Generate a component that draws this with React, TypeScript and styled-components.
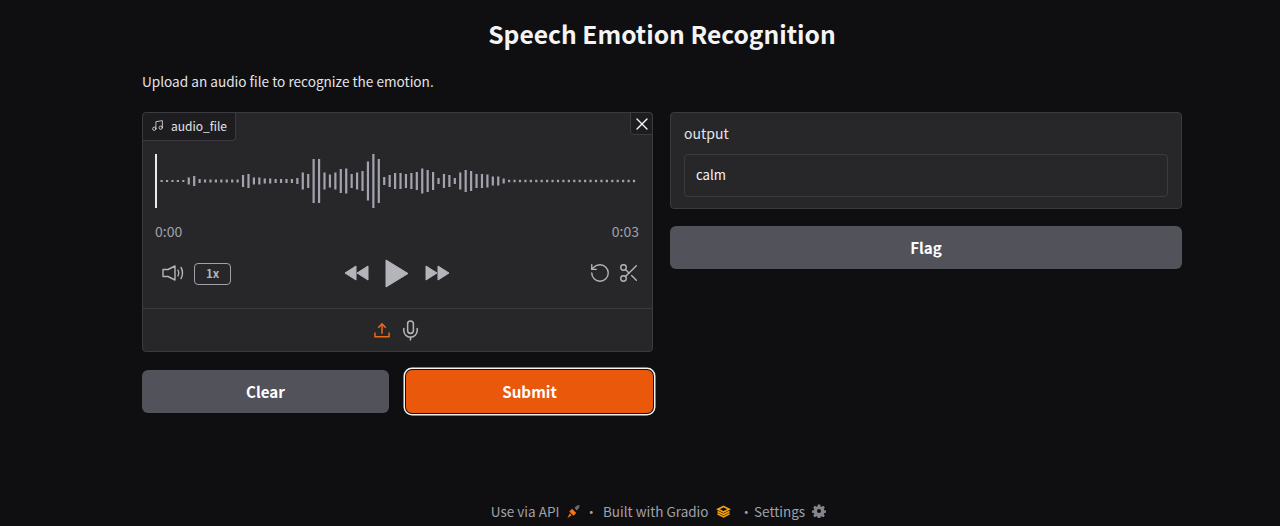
import styled, { createGlobalStyle } from "styled-components";
import { Mic, Music, RotateCcw, Scissors, X } from "lucide-react";

const GlobalStyle = createGlobalStyle`
  html, body {
    margin: 0;
    height: 100%;
    background: #0f0f11;
    overflow: hidden;
  }
  body {
    font-family: "Noto Sans CJK SC", "Noto Sans", sans-serif;
    color: #f4f4f5;
  }
  * {
    box-sizing: border-box;
  }
`;

const Page = styled.div`
  display: flex;
  flex-direction: column;
  height: 526px;
  padding: 0 98px 0 142px;
`;

const Title = styled.h1`
  margin: 0;
  padding-top: 15px;
  height: 52px;
  font-size: 24.6px;
  line-height: 37px;
  font-weight: 700;
  text-align: center;
  color: #f4f4f5;
`;

const Description = styled.p`
  margin: 19px 0 0;
  height: 41px;
  font-size: 13.6px;
  line-height: 21px;
  color: #e4e4e7;
`;

const Columns = styled.div`
  display: grid;
  grid-template-columns: 511px 512px;
  gap: 17px;
`;

const Column = styled.div`
  display: flex;
  flex-direction: column;
  gap: 17px;
`;

const Block = styled.div`
  position: relative;
  background: #27272a;
  border: 1px solid #3a3a40;
  border-radius: 4px;
`;

const LabelTag = styled.div`
  display: inline-flex;
  align-items: center;
  gap: 7px;
  height: 28px;
  padding: 0 8px 2px 8px;
  background: #1d1d20;
  border-right: 1px solid #3a3a40;
  border-bottom: 1px solid #3a3a40;
  border-radius: 4px 0 4px 0;
  font-size: 12px;
  color: #e4e4e7;
`;

const CloseButton = styled.button`
  position: absolute;
  top: -1px;
  right: -1px;
  display: flex;
  align-items: center;
  justify-content: center;
  width: 23px;
  height: 23px;
  padding: 0;
  background: #1d1d20;
  border: 1px solid #3a3a40;
  border-radius: 0 4px 0 4px;
  color: #f4f4f5;
`;

const Wave = styled.svg`
  display: block;
  margin: 13px 0 0 12px;
`;

const TimeRow = styled.div`
  display: flex;
  justify-content: space-between;
  margin-top: 13px;
  padding: 0 13px 0 12px;
  font-size: 14px;
  line-height: 20px;
  color: #a1a1aa;
`;

const Controls = styled.div`
  display: grid;
  grid-template-columns: 1fr auto 1fr;
  align-items: center;
  height: 30px;
  margin-top: 17px;
  padding: 0 12px 0 19px;
  color: #b4b4bb;
`;

const ControlGroup = styled.div<{ $end?: boolean }>`
  display: flex;
  align-items: center;
  justify-content: ${(p) => (p.$end ? "flex-end" : "flex-start")};
  gap: ${(p) => (p.$end ? "7px" : "8px")};
`;

const Transport = styled.div`
  display: flex;
  align-items: center;
  gap: 16px;
  margin-left: -8px;
`;

const SpeedButton = styled.button`
  width: 37px;
  height: 22px;
  margin-top: 2px;
  padding: 0 0 2px;
  background: transparent;
  border: 1px solid #a1a1aa;
  border-radius: 4px;
  font-family: inherit;
  font-size: 11.5px;
  font-weight: 700;
  color: #b4b4bb;
`;

const SourceBar = styled.div`
  display: flex;
  align-items: center;
  justify-content: center;
  gap: 9px;
  height: 43px;
  margin-top: 20px;
  padding-left: 1px;
  border-top: 1px solid #3a3a40;
  color: #b4b4bb;
`;

const ButtonRow = styled.div`
  display: grid;
  grid-template-columns: 247px 247px;
  gap: 17px;
  margin-top: 1px;
`;

const ActionButton = styled.button<{ $primary?: boolean }>`
  height: 43px;
  padding: 0 0 2px;
  border: 0;
  border-radius: 6px;
  background: ${(p) => (p.$primary ? "#ea580c" : "#52525b")};
  box-shadow: ${(p) =>
    p.$primary ? "0 0 0 1px #0f0f11, 0 0 0 2.5px #f4f4f5" : "none"};
  font-family: inherit;
  font-size: 15.2px;
  font-weight: 700;
  color: #ffffff;
`;

const OutputBlock = styled(Block)`
  height: 97px;
  padding: 10px 13px 0;
`;

const OutputLabel = styled.div`
  font-size: 14px;
  line-height: 20px;
  color: #e4e4e7;
`;

const OutputBox = styled.div`
  display: flex;
  align-items: center;
  height: 43px;
  margin-top: 11px;
  padding: 0 11px 2px;
  background: #27272a;
  border: 1px solid #3a3a40;
  border-radius: 4px;
  font-size: 13.2px;
  color: #f4f4f5;
`;

const Footer = styled.footer`
  display: flex;
  align-items: center;
  justify-content: center;
  margin-top: auto;
  height: 28px;
  padding: 0 7px 2px 0;
  font-size: 13.5px;
  color: #a1a1aa;
`;

const FooterItem = styled.span<{ $gap: number }>`
  display: inline-flex;
  align-items: center;
  gap: ${(p) => p.$gap}px;
`;

const Dot = styled.span<{ $wide?: boolean }>`
  margin: ${(p) => (p.$wide ? "0 1px 0 9px" : "0 5px 0 4px")};
`;

const leftHeights = [
  2, 2, 2, 2, 2, 7, 10, 4, 3, 3, 3, 3, 3, 3, 3, 12, 14, 7, 7, 5, 5, 4, 4, 4, 4,
  6, 17, 14, 44, 44, 17, 13, 17, 24, 25, 14, 17, 20, 39, 54, 44, 8, 12, 16, 16,
];
const rightHeights = [
  14, 16, 18, 25, 22, 18, 6, 14, 12, 6, 17, 22, 20, 14, 14, 13, 9, 9, 5,
];
const barHeights = [
  ...leftHeights,
  ...rightHeights,
  ...Array.from({ length: 24 }, () => 2.4),
];

function Waveform() {
  return (
    <Wave width="490" height="54" viewBox="0 0 490 54">
      <rect x="0" y="0" width="2" height="54" fill="#e9e9f2" />
      {barHeights.map((h, i) => (
        <rect
          key={i}
          x={5.5 + i * 5.43}
          y={27 - h / 2}
          width="2.2"
          height={h}
          fill="#a3a3af"
        />
      ))}
    </Wave>
  );
}

function VolumeIcon() {
  return (
    <svg width="24" height="20" viewBox="0 0 24 20" fill="none" stroke="currentColor" strokeWidth="1.4">
      <path d="M1 6.500h5L13 3v14l-7-3.500H1z" strokeLinejoin="round" />
      <path d="M16 7c1 1.800 1 4.200 0 6" strokeLinecap="round" />
      <path d="M19 4.500c2 3 2 8 0 11" strokeLinecap="round" />
    </svg>
  );
}

function RewindIcon() {
  return (
    <svg width="25" height="18" viewBox="0 0 25 18" fill="currentColor" stroke="currentColor" strokeLinejoin="round">
      <path d="M12 2v14L1 9z" />
      <path d="M24 2v14L13 9z" />
    </svg>
  );
}

function ForwardIcon() {
  return (
    <svg width="25" height="18" viewBox="0 0 25 18" fill="currentColor" stroke="currentColor" strokeLinejoin="round">
      <path d="M1 2v14L12 9z" />
      <path d="M13 2v14L24 9z" />
    </svg>
  );
}

function PlayIcon() {
  return (
    <svg width="24" height="29" viewBox="0 0 24 29" fill="currentColor" stroke="currentColor" strokeLinejoin="round">
      <path d="M1 1l22 13.500L1 28z" />
    </svg>
  );
}

function UploadIcon() {
  return (
    <svg width="16" height="17" viewBox="0 0 17 17" fill="none" stroke="#ea6a1c" strokeWidth="1.6">
      <path d="M1 10.500v4.700h15v-4.700" />
      <path d="M8.500 12V2" />
      <path d="M4.500 5.500l4-4 4 4" />
    </svg>
  );
}

function RocketIcon() {
  return (
    <svg width="13" height="13" viewBox="0 0 14 14">
      <path d="M8 3l3-2.500 2.500-.5-.5 3-2.500 3z" fill="#6b6b75" />
      <path d="M5.500 4L10 8.500 7 11.500 2.500 7z" fill="#f97316" />
      <path d="M3 9l2 2-4.500 3z" fill="#f97316" />
    </svg>
  );
}

function GradioLogo() {
  return (
    <svg width="15" height="13" viewBox="0 0 16 14" fill="none" stroke="#f59e0b" strokeWidth="1.8">
      <path d="M8 1.500l6 3L8 7.500l-6-3z" />
      <path d="M1.500 7L8 10.200 14.500 7" />
      <path d="M1.500 9.500L8 12.800l6.500-3.300" />
    </svg>
  );
}

function GearIcon() {
  return (
    <svg width="14" height="14" viewBox="0 0 24 24" fill="#85858e">
      <path
        fillRule="evenodd"
        d="M10 1h4l.6 3.100 1.900.8 2.700-1.800 2.800 2.800-1.800 2.700.8 1.900 3 .5v4l-3 .6-.8 1.900 1.800 2.600-2.800 2.800-2.700-1.800-1.900.8-.6 3.100h-4l-.6-3.100-1.900-.8-2.700 1.800-2.800-2.800 1.800-2.600-.8-1.900-3-.6v-4l3-.5.8-1.900-1.800-2.700 2.800-2.800 2.700 1.800 1.900-.8zM12 8.500a3.500 3.500 0 1 0 0 7 3.500 3.500 0 0 0 0-7z"
      />
    </svg>
  );
}

export default function App() {
  return (
    <>
      <GlobalStyle />
      <Page>
        <Title>Speech Emotion Recognition</Title>
        <Description>Upload an audio file to recognize the emotion.</Description>
        <Columns>
          <Column>
            <Block>
              <LabelTag>
                <Music size={13} strokeWidth={1.5} />
                audio_file
              </LabelTag>
              <CloseButton>
                <X size={20} strokeWidth={1.6} />
              </CloseButton>
              <Waveform />
              <TimeRow>
                <span>0:00</span>
                <span>0:03</span>
              </TimeRow>
              <Controls>
                <ControlGroup>
                  <VolumeIcon />
                  <SpeedButton>1x</SpeedButton>
                </ControlGroup>
                <Transport>
                  <RewindIcon />
                  <PlayIcon />
                  <ForwardIcon />
                </Transport>
                <ControlGroup $end>
                  <RotateCcw size={22} strokeWidth={1.5} />
                  <Scissors size={22} strokeWidth={1.5} />
                </ControlGroup>
              </Controls>
              <SourceBar>
                <UploadIcon />
                <Mic size={23} strokeWidth={1.6} />
              </SourceBar>
            </Block>
            <ButtonRow>
              <ActionButton>Clear</ActionButton>
              <ActionButton $primary>Submit</ActionButton>
            </ButtonRow>
          </Column>
          <Column>
            <OutputBlock>
              <OutputLabel>output</OutputLabel>
              <OutputBox>calm</OutputBox>
            </OutputBlock>
            <ActionButton>Flag</ActionButton>
          </Column>
        </Columns>
        <Footer>
          <FooterItem $gap={8}>
            Use via API <RocketIcon />
          </FooterItem>
          <Dot>·</Dot>
          <FooterItem $gap={7}>
            Built with Gradio <GradioLogo />
          </FooterItem>
          <Dot $wide>·</Dot>
          <FooterItem $gap={7}>
            Settings <GearIcon />
          </FooterItem>
        </Footer>
      </Page>
    </>
  );
}
